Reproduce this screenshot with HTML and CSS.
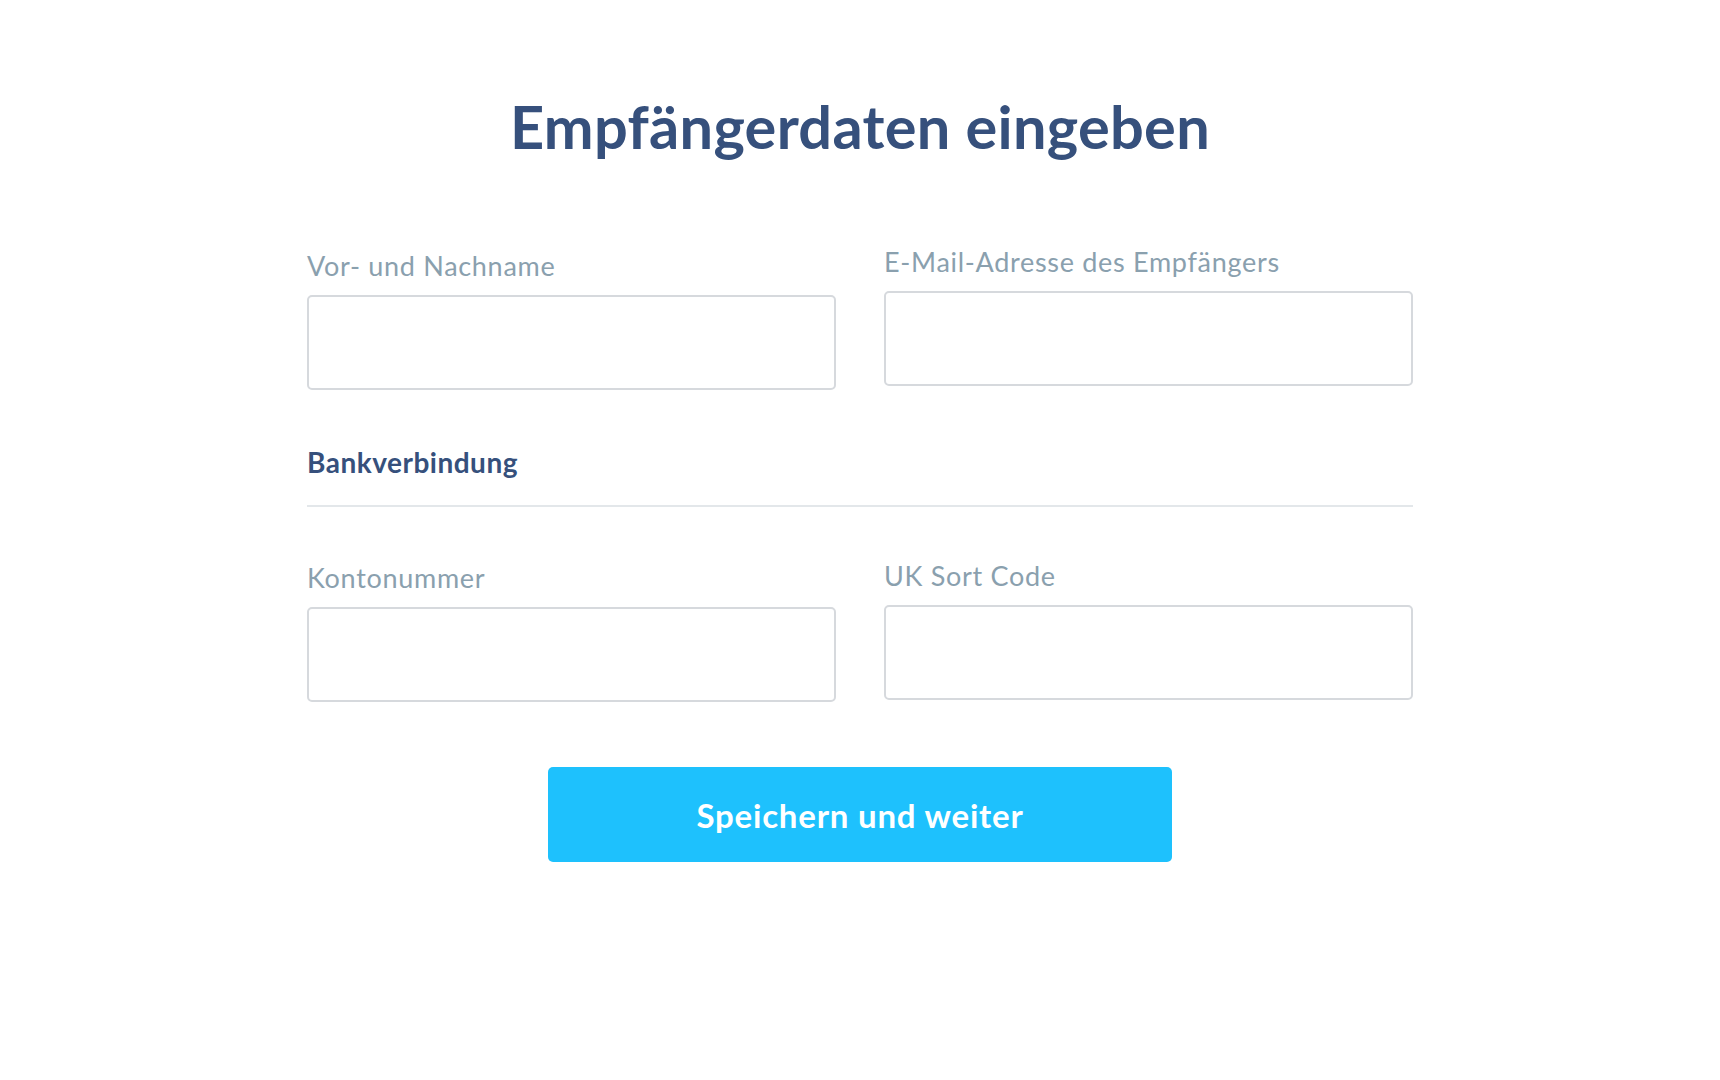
FILE: index.html
```html
<!DOCTYPE html>
<html lang="de">
<head>
<meta charset="utf-8">
<title>Empfängerdaten eingeben</title>
<link rel="stylesheet" href="styles.css">
</head>
<body>
<main class="page">
  <h1 class="title">Empfängerdaten eingeben</h1>
  <form class="form">
    <div class="row">
      <label class="field">
        <span class="label">Vor- und Nachname</span>
        <input class="input" type="text">
      </label>
      <label class="field field-up">
        <span class="label">E-Mail-Adresse des Empfängers</span>
        <input class="input" type="email">
      </label>
    </div>
    <div class="section">
      <h2 class="section-title">Bankverbindung</h2>
    </div>
    <div class="row">
      <label class="field">
        <span class="label">Kontonummer</span>
        <input class="input" type="text">
      </label>
      <label class="field field-up-sm">
        <span class="label">UK Sort Code</span>
        <input class="input" type="text">
      </label>
    </div>
    <div class="actions">
      <button class="button" type="button">Speichern und weiter</button>
    </div>
  </form>
</main>
</body>
</html>
```
FILE: styles.css
```css
* { box-sizing: border-box; }
html, body { margin: 0; padding: 0; background: #ffffff; }
body { font-family: Lato, "Open Sans", "Liberation Sans", sans-serif; }

.page {
  width: 1106px;
  margin: 0 auto;
  padding-top: 91px;
}

.title {
  margin: 0;
  text-align: center;
  font-size: 59.5px;
  line-height: 70px;
  font-weight: 700;
  color: #36507c;
  letter-spacing: 0.3px;
}

.form { margin-top: 90px; }

.row {
  display: grid;
  grid-template-columns: 1fr 1fr;
  column-gap: 48px;
  align-items: start;
}

.field { display: flex; flex-direction: column; }
.field-up { margin-top: -4px; }
.field-up-sm { margin-top: -2px; }

.label {
  font-size: 27px;
  line-height: 30px;
  letter-spacing: 0.7px;
  color: #8aa0ae;
  margin-bottom: 14px;
}

.input {
  height: 95px;
  width: 100%;
  border: 2px solid #d6d9dd;
  border-radius: 5px;
  background: #fff;
  font: inherit;
  padding: 0 18px;
  outline: none;
}

.section {
  margin-top: 56px;
  padding-bottom: 27px;
  border-bottom: 2px solid #e3e7ea;
  margin-bottom: 56px;
}

.section-title {
  margin: 0;
  font-size: 28px;
  line-height: 32px;
  font-weight: 700;
  letter-spacing: 0.5px;
  color: #36507c;
}

.actions {
  display: flex;
  justify-content: center;
  margin-top: 65px;
}

.button {
  width: 624px;
  height: 95px;
  border: none;
  border-radius: 5px;
  background: #1ec1fd;
  color: #ffffff;
  font-family: inherit;
  font-size: 33px;
  font-weight: 700;
  letter-spacing: 0.8px;
  cursor: pointer;
}
```
